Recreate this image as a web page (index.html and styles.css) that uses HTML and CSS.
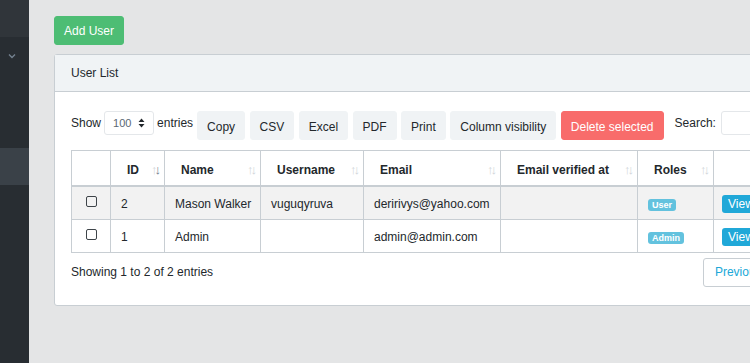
FILE: index.html
```html
<!DOCTYPE html>
<html lang="en">
<head>
    <meta charset="UTF-8">
    <meta name="viewport" content="width=device-width, initial-scale=1.0">
    <title>Users</title>
    <link rel="stylesheet" href="styles.css">
</head>
<body>

    <!-- Sidebar -->
    <aside class="sidebar">
        <div class="sidebar-top"></div>
        <div class="sidebar-item">
            <svg class="chevron" width="8" height="6" viewBox="0 0 8 6"><path d="M1 1.5 L4 4.5 L7 1.5" fill="none" stroke="#73818f" stroke-width="1.4"/></svg>
        </div>
        <div class="sidebar-item"></div>
        <div class="sidebar-item"></div>
        <div class="sidebar-item active"></div>
    </aside>

    <!-- Main content -->
    <main class="content">
        <button class="btn btn-success">Add User</button>

        <div class="card">
            <div class="card-header">User List</div>
            <div class="card-body">

                <div class="dt-toolbar">
                    <label class="dt-length">Show
                        <span class="select">100
                            <svg width="7" height="10" viewBox="0 0 7 10"><path d="M3.5 0.5 L6.5 4 L0.5 4 Z M3.5 9.5 L6.5 6 L0.5 6 Z" fill="#23282c"/></svg>
                        </span>
                        entries</label>
                    <div class="dt-buttons">
                        <button class="btn btn-light">Copy</button>
                        <button class="btn btn-light">CSV</button>
                        <button class="btn btn-light">Excel</button>
                        <button class="btn btn-light">PDF</button>
                        <button class="btn btn-light">Print</button>
                        <button class="btn btn-light">Column visibility</button>
                        <button class="btn btn-danger">Delete selected</button>
                    </div>
                    <label class="dt-search">Search: <span class="search-input"></span></label>
                </div>

                <table class="table">
                    <colgroup>
                        <col style="width: 39px">
                        <col style="width: 54px">
                        <col style="width: 96px">
                        <col style="width: 103px">
                        <col style="width: 137px">
                        <col style="width: 137px">
                        <col style="width: 76px">
                        <col>
                    </colgroup>
                    <thead>
                        <tr>
                            <th></th>
                            <th class="sort">ID <span class="arrows"><span>↑</span><span class="on">↓</span></span></th>
                            <th class="sort">Name <span class="arrows"><span>↑</span><span>↓</span></span></th>
                            <th class="sort">Username <span class="arrows"><span>↑</span><span>↓</span></span></th>
                            <th class="sort">Email <span class="arrows"><span>↑</span><span>↓</span></span></th>
                            <th class="sort">Email verified at <span class="arrows"><span>↑</span><span>↓</span></span></th>
                            <th class="sort">Roles <span class="arrows"><span>↑</span><span>↓</span></span></th>
                            <th></th>
                        </tr>
                    </thead>
                    <tbody>
                        <tr class="odd">
                            <td class="check"><span class="checkbox"></span></td>
                            <td>2</td>
                            <td>Mason Walker</td>
                            <td>vuguqyruva</td>
                            <td>deririvys@yahoo.com</td>
                            <td></td>
                            <td><span class="badge">User</span></td>
                            <td><a class="btn-view">View</a></td>
                        </tr>
                        <tr>
                            <td class="check"><span class="checkbox"></span></td>
                            <td>1</td>
                            <td>Admin</td>
                            <td></td>
                            <td>admin@admin.com</td>
                            <td></td>
                            <td><span class="badge">Admin</span></td>
                            <td><a class="btn-view">View</a></td>
                        </tr>
                    </tbody>
                </table>

                <div class="dt-footer">
                    <div class="dt-info">Showing 1 to 2 of 2 entries</div>
                    <div class="pagination">
                        <a class="page-link">Previous</a>
                        <a class="page-link">1</a>
                        <a class="page-link">Next</a>
                    </div>
                </div>

            </div>
        </div>
    </main>

</body>
</html>
```

FILE: styles.css
```css
body {
    margin: 0;
    display: flex;
    height: 363px;
    overflow: hidden;
    font-family: "Liberation Sans", Arial, sans-serif;
    font-size: 12px;
    color: #23282c;
    background-color: #e4e5e6;
}

/* Sidebar */
.sidebar {
    width: 29px;
    flex-shrink: 0;
    background-color: #282d32;
}

.sidebar-top {
    height: 37px;
    background-color: #30353a;
}

.sidebar-item {
    height: 37px;
    display: flex;
    align-items: center;
    padding-left: 8px;
}

.sidebar-item.active {
    background-color: #3a4148;
}

/* Main content */
.content {
    flex: 1;
    min-width: 0;
    padding: 16px 0 0 25px;
    overflow: hidden;
}

.btn {
    font-family: inherit;
    font-size: 12px;
    border: 1px solid transparent;
    border-radius: 3px;
    padding: 0 9px;
    height: 29px;
    color: #23282c;
    white-space: nowrap;
    flex-shrink: 0;
    cursor: pointer;
}

.btn-success {
    background-color: #4dbd74;
    border-color: #4dbd74;
    color: #fff;
    width: 70px;
    padding: 0;
}

.btn-light {
    background-color: #f0f3f5;
    border-color: #f0f3f5;
    padding-top: 2px;
}

.btn-danger {
    background-color: #f86c6b;
    border-color: #f86c6b;
    color: #fff;
    padding-top: 2px;
}

/* Card */
.card {
    margin-top: 9px;
    width: 812px;
    background-color: #fff;
    border: 1px solid #c8ced3;
    border-radius: 3px;
}

.card-header {
    height: 36px;
    line-height: 37px;
    padding: 0 16px;
    background-color: #f0f3f5;
    border-bottom: 1px solid #c8ced3;
}

.card-body {
    padding: 19px 16px 18px;
}

/* DataTables toolbar */
.dt-toolbar {
    display: flex;
    align-items: flex-start;
    height: 29px;
    white-space: nowrap;
}

.dt-length {
    display: flex;
    align-items: center;
    gap: 3px;
    height: 24px;
    flex-shrink: 0;
}

.select {
    display: inline-flex;
    align-items: center;
    justify-content: space-between;
    box-sizing: border-box;
    width: 50px;
    height: 24px;
    padding: 0 8px 0 8px;
    border: 1px solid #e4e7ea;
    border-radius: 3px;
    font-size: 11px;
    color: #5c6873;
}

.dt-buttons {
    display: flex;
    gap: 4.5px;
    margin-left: 4px;
    flex-shrink: 0;
}

.dt-search {
    display: flex;
    align-items: center;
    height: 24px;
    margin-left: 11px;
    flex-shrink: 0;
}

.search-input {
    box-sizing: border-box;
    width: 130px;
    height: 24px;
    margin-left: 5px;
    border: 1px solid #e4e7ea;
    border-radius: 3px;
}

/* Table */
.table {
    margin-top: 10px;
    width: 100%;
    table-layout: fixed;
    border-collapse: collapse;
}

.table th,
.table td {
    border: 1px solid #c8ced3;
    text-align: left;
    white-space: nowrap;
    overflow: hidden;
}

.table th {
    height: 31px;
    padding: 3px 16px 0;
    font-weight: bold;
    border-bottom: 2px solid #c8ced3;
    position: relative;
}

.table td {
    height: 31px;
    padding: 1px 10px 0;
}

.table tr.odd td {
    background-color: #f2f2f2;
}

.arrows {
    position: absolute;
    right: 6px;
    top: 11px;
    font-size: 13px;
    font-weight: normal;
    letter-spacing: -3px;
    color: #d1d6da;
}

.arrows .on {
    color: #73818f;
}

.table td.check {
    text-align: center;
    padding: 0;
}

.checkbox {
    display: inline-block;
    width: 9px;
    height: 9px;
    border: 1px solid #3e4449;
    border-radius: 2px;
    vertical-align: 0;
}

.badge {
    display: inline-block;
    padding: 0 4px;
    height: 12px;
    line-height: 12px;
    border-radius: 3px;
    background-color: #63c2de;
    color: #fff;
    font-size: 9px;
    font-weight: bold;
}

.btn-view {
    display: inline-block;
    height: 18px;
    line-height: 18px;
    padding: 0 6px;
    margin-left: -2px;
    border-radius: 3px;
    background-color: #20a8d8;
    color: #fff;
    font-size: 12px;
}

/* Footer */
.dt-footer {
    display: flex;
    justify-content: space-between;
    align-items: flex-start;
    margin-top: 5px;
}

.dt-info {
    margin-top: 7px;
}

.pagination {
    display: flex;
}

.page-link {
    display: block;
    height: 27px;
    line-height: 27px;
    padding: 0 11px;
    border: 1px solid #c8ced3;
    margin-left: -1px;
    color: #20a8d8;
    background-color: #fff;
}

.page-link:first-child {
    border-radius: 3px 0 0 3px;
}
```
